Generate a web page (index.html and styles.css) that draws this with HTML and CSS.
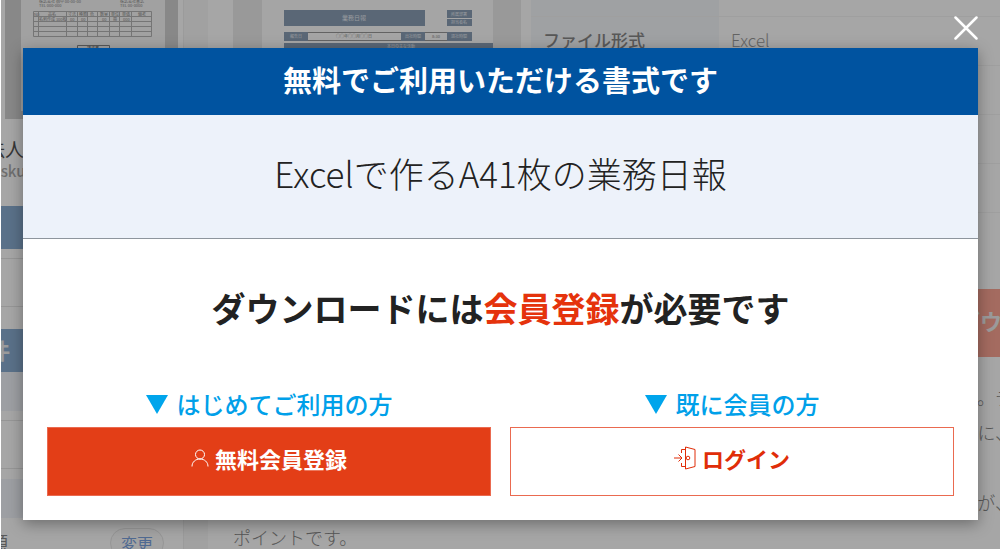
FILE: index.html
```html
<!DOCTYPE html>
<html lang="ja">
<head>
  <meta charset="utf-8">
  <meta name="viewport" content="width=device-width, initial-scale=1">
  <title>Excelで作るA41枚の業務日報</title>
  <link rel="stylesheet" href="styles.css">
</head>
<body>
  <div class="page">
    <div class="sidebar">
      <div class="thumb">
        <svg width="144" height="144" viewBox="0 0 144 144">
          <rect width="144" height="144" fill="#f7f7f7"/>
          <g fill="#888" font-size="4">
            <text x="18" y="36">株式会社 御中 00-00-00</text>
            <text x="18" y="40">TEL 000-000</text>
            <text x="99" y="36">株式会社書式</text>
            <text x="99" y="40">TEL 00-0000</text>
            <text x="13" y="49">No</text><text x="27" y="49">品名</text><text x="47" y="49">寸法</text><text x="58" y="49">種類</text>
            <text x="69" y="49">色</text><text x="79" y="49">数量</text><text x="90" y="49">単位</text><text x="101" y="49">単価</text><text x="117" y="49">備考</text>
            <text x="18" y="54">名刺作成 100枚</text><text x="49" y="54">00</text><text x="60" y="54">00</text><text x="81" y="54">00</text><text x="92" y="54">冊</text><text x="102" y="54">000</text>
          </g>
          <path d="M12.500 44.500h118v25h-118zM12.500 49.500h118M12.500 54.500h118M12.500 59.500h118M12.500 64.500h118M17.500 44.500v25M45.500 44.500v25M56.500 44.500v25M66.500 44.500v25M76.500 44.500v25M88.500 44.500v25M98.500 44.500v25M110.500 44.500v25" fill="none" stroke="#b4b4b4"/>
          <path d="M56.500 78.500h32v12h-32z" fill="none" stroke="#888"/>
          <text x="66" y="83" font-size="4" fill="#555">請求書</text>
        </svg>
      </div>
      <p class="item-name">法人</p>
      <p class="item-site">askul</p>
      <div class="side-title"></div>
      <div class="side-box"></div>
      <div class="side-title side-search">条件</div>
      <div class="side-sub"></div>
      <div class="side-box"></div>
      <div class="side-sub"></div>
      <div class="side-row"><span>金額</span><button class="change" type="button">変更</button></div>
    </div>

    <div class="content">
      <div class="detail">
        <div class="preview">
          <svg width="231" height="100" viewBox="0 0 231 100">
            <rect width="231" height="100" fill="#fdfdfd"/>
            <g fill="#8a9fb6">
              <rect x="22" y="43" width="141" height="16"/>
              <rect x="185" y="43" width="25" height="8"/>
              <rect x="185" y="52" width="25" height="7"/>
              <rect x="22" y="65" width="24" height="9"/>
              <rect x="139" y="65" width="24" height="9"/>
              <rect x="185" y="65" width="25" height="9"/>
              <rect x="22" y="76" width="209" height="16"/>
            </g>
            <path d="M46 65.500h93M46 73.500h93M163 65.500h22M163 73.500h22" stroke="#999" fill="none"/>
            <g fill="#e6ebf2" font-size="4" text-anchor="middle">
              <text x="92" y="53" font-size="6">業務日報</text>
              <text x="197" y="49">所属部署</text>
              <text x="197" y="57">担当者名</text>
              <text x="34" y="71">報告日</text>
              <text x="151" y="71">出社時間</text>
              <text x="197" y="71">退社時間</text>
              <text x="139" y="81">本日の主な活動</text>
            </g>
            <g fill="#888" font-size="4" text-anchor="middle">
              <text x="92" y="71">○○年○○月○○日</text>
              <text x="174" y="71">8:30</text>
            </g>
          </svg>
        </div>
        <div class="spec">
          <table>
            <tr><th></th><td></td></tr>
            <tr><th>ファイル形式</th><td>Excel</td></tr>
            <tr><th></th><td></td></tr>
            <tr><th></th><td></td></tr>
            <tr><th></th><td></td></tr>
          </table>
          <button class="download" type="button">ダウンロード</button>
        </div>
      </div>
      <div class="description">
        <p class="line-end">。テ</p>
        <p class="line-end">に、</p>
        <p></p>
        <p class="line-end">が、</p>
        <p>ポイントです。</p>
      </div>
    </div>
  </div>

  <div class="overlay">
    <button class="close" type="button" aria-label="閉じる">
      <svg width="24" height="24" viewBox="0 0 24 24"><path d="M1.500 1.500l21 21M22.500 1.500l-21 21"/></svg>
    </button>
    <div class="modal" role="dialog" aria-labelledby="modal-title">
      <h2 class="modal-title" id="modal-title">無料でご利用いただける書式です</h2>
      <p class="modal-doc">Excelで作るA41枚の業務日報</p>
      <div class="modal-body">
        <p class="lead">ダウンロードには<em>会員登録</em>が必要です</p>
        <div class="choices">
          <div class="choice">
            <p class="choice-label"><i class="tri"></i>はじめてご利用の方</p>
            <a class="btn btn-register" href="#">
              <svg width="18" height="18" viewBox="0 0 18 18"><circle cx="9" cy="5.500" r="4.500"/><path d="M1 17.500c0-4.500 3.500-7.500 8-7.500s8 3 8 7.500"/></svg>
              無料会員登録
            </a>
          </div>
          <div class="choice">
            <p class="choice-label"><i class="tri"></i>既に会員の方</p>
            <a class="btn btn-login" href="#">
              <svg width="22" height="24" viewBox="0 0 22 24"><path d="M11.500 1l9.500 2.500v17L11.500 23zM11.500 3.500h-4v3.500M7.500 17v3.500h4M0 12h7.500M4.500 8.500L8 12l-3.500 3.500"/><circle cx="14" cy="12" r="1.800"/></svg>
              ログイン
            </a>
          </div>
        </div>
      </div>
    </div>
  </div>
</body>
</html>
```

FILE: styles.css
```css
* {
  box-sizing: border-box;
}

html {
  overflow: hidden;
  background: #fff;
}

body {
  margin: 0 0 0 1px;
  height: 100vh;
  overflow: hidden;
  position: relative;
  color: #222;
  font-family: "Noto Sans CJK JP", sans-serif;
}

p, h2 {
  margin: 0;
}

button {
  font-family: inherit;
  padding: 0;
  border: 0;
}

/* page under the overlay, scrolled a little */
.page {
  display: flex;
  gap: 24px;
  margin-top: -33px;
  background: #f7f7f7;
}

.sidebar {
  flex: 0 0 183px;
  background: #fff;
  border-right: 1px solid #eee;
  color: #888;
}

.thumb {
  height: 152px;
  margin: 0 5px 0 4px;
  padding-left: 16px;
  background: #d2d2d2;
}

.thumb svg {
  display: block;
}

.item-name {
  margin: 18px 0 0 -15px;
  color: #555;
  font-size: 19px;
  line-height: 24px;
}

.item-site {
  margin-left: -9px;
  color: #aaa;
  font-size: 15px;
  font-weight: 500;
  line-height: 20px;
}

.side-title {
  height: 43px;
  margin-top: 25px;
  background: #8aaed3;
}

.side-search {
  margin: 22px 0 0;
  text-indent: -35px;
  color: #eee;
  font-size: 22px;
  font-weight: 700;
  line-height: 40px;
  overflow: hidden;
}

.side-box {
  height: 49px;
  margin-top: 9px;
  border: solid #e6e6e6;
  border-width: 1px 0;
}

.side-sub {
  height: 39px;
  background: #f1f5fa;
}

.side-box + .side-sub {
  margin-top: 10px;
}

.side-row {
  display: flex;
  justify-content: space-between;
  padding: 10px 19px 0 0;
  font-size: 17px;
  line-height: 28px;
}

.side-row span {
  margin-left: -27px;
}

.change {
  width: 54px;
  height: 30px;
  border: 1px solid #e6e6e6;
  border-radius: 15px;
  background: #fafafa;
  color: #7ba3e0;
  font-size: 16px;
  line-height: 26px;
}

.content {
  flex: 1;
  min-width: 0;
  padding-left: 25px;
  background: #fff;
}

.detail {
  display: flex;
  gap: 10px;
}

.preview {
  flex: 0 0 288px;
  padding-left: 29px;
  background: #ebebeb;
}

.preview svg {
  display: block;
}

.spec {
  flex: 1;
}

.spec table {
  width: 100%;
  border-collapse: collapse;
  table-layout: fixed;
}

.spec th,
.spec td {
  height: 49px;
  padding: 0 12px 2px;
  border-bottom: 1px solid #f4f4f4;
  color: #999;
  font-size: 17px;
  font-weight: 400;
  text-align: left;
}

.spec th {
  width: 188px;
  background: #f5f7fa;
  color: #888;
  font-weight: 500;
}

.spec td {
  font-weight: 300;
}

.download {
  display: block;
  width: 100%;
  height: 68px;
  margin-top: 76px;
  padding-bottom: 6px;
  background: #fca594;
  color: #eee;
  font-size: 22px;
  font-weight: 700;
  text-indent: 427px;
  text-align: left;
  white-space: nowrap;
  overflow: hidden;
}

.description {
  padding-top: 23px;
  color: #888;
  font-size: 18px;
  font-weight: 300;
  line-height: 35px;
}

.description p {
  height: 35px;
}

.description .line-end {
  margin-right: -13px;
  text-align: right;
}

.overlay {
  position: absolute;
  inset: 0;
  padding: 0 22px;
  background: rgba(0, 0, 0, 0.35);
}

.close {
  display: block;
  width: 24px;
  height: 24px;
  margin: 16px 0 8px auto;
  background: none;
  cursor: pointer;
}

.close svg {
  display: block;
  fill: none;
  stroke: #fff;
  stroke-width: 2.5;
  stroke-linecap: round;
}

.modal {
  background: #fff;
  box-shadow: 0 4px 14px rgba(0, 0, 0, 0.35);
  text-align: center;
}

.modal-title {
  padding: 10px 0 14px;
  background: #0053a0;
  color: #fff;
  font-size: 29px;
  font-weight: 700;
  line-height: 43px;
}

.modal-doc {
  padding: 33px 0 40px;
  background: #edf2fa;
  border-bottom: 1px solid #8e959d;
  font-size: 35px;
  font-weight: 300;
  line-height: 50px;
}

.modal-body {
  padding: 44px 24px 24px;
}

.lead {
  margin-bottom: 48px;
  font-size: 34px;
  font-weight: 700;
  line-height: 50px;
}

.lead em {
  color: #e5330c;
  font-style: normal;
}

.choices {
  display: flex;
  gap: 19px;
}

.choice {
  flex: 1;
}

.choice-label {
  display: flex;
  justify-content: center;
  align-items: center;
  gap: 9px;
  color: #00a0e9;
  font-size: 24px;
  font-weight: 500;
  line-height: 46px;
}

.tri {
  border: solid transparent;
  border-width: 19px 11px 0;
  border-top-color: #00a5ec;
}

.btn {
  display: flex;
  justify-content: center;
  align-items: center;
  gap: 6px;
  height: 69px;
  padding-bottom: 7px;
  border: 1px solid #ea6a50;
  font-size: 22px;
  font-weight: 700;
  text-decoration: none;
}

.btn svg {
  fill: none;
  stroke: currentColor;
}

.btn-register {
  background: #e33e17;
  color: #fff;
}

.btn-login {
  background: #fff;
  color: #e02d08;
}
```
